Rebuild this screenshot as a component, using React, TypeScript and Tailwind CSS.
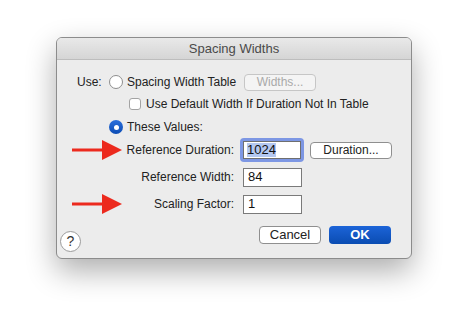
export default function App() {
  const font = { fontFamily: '"Liberation Sans", Arial, sans-serif' };

  const Arrow = () => (
    <svg width="50" height="20" viewBox="0 0 50 20" className="shrink-0">
      <rect x="0" y="8.5" width="31" height="3" fill="#ec2a1e" />
      <polygon points="30,0 50,10 30,20" fill="#ec2a1e" />
    </svg>
  );

  const Field = ({ value, focused }: { value: string; focused?: boolean }) =>
    focused ? (
      <div className="rounded-[4px] bg-[#7d97e4] p-[3px]">
        <div className="flex h-[18px] w-[58px] items-center border border-[#6f6f6f] bg-white pl-[3px] text-[13px]">
          <span className="bg-[#b4c8f1] leading-[14px] text-[#111]">{value}</span>
        </div>
      </div>
    ) : (
      <div className="ml-[3px] flex h-[19px] w-[59px] items-center border border-[#7a7a7a] bg-white pl-[4px] text-[13px] text-[#111]">
        {value}
      </div>
    );

  return (
    <div className="h-[332px] w-[467px] bg-white pl-[56px] pt-[37px] text-[12px] whitespace-nowrap text-[#222]" style={font}>
      <div className="flex h-[222px] w-[356px] flex-col overflow-hidden rounded-[6px] border border-[#8c8c8c] bg-[#ececec] shadow-[0_12px_30px_rgba(0,0,0,0.32)]">
        {/* title bar */}
        <div className="flex h-[22px] shrink-0 items-center justify-center border-b border-[#bdbdbd] bg-gradient-to-b from-[#e9e9e9] to-[#d5d5d5] text-[13px] text-[#4a4a4a]">
          Spacing Widths
        </div>

        <div className="flex flex-1 flex-col pt-[13px]">
          {/* use row */}
          <div className="flex h-[18px] items-center">
            <span className="ml-[20px] w-[32px] shrink-0">Use:</span>
            <span className="h-[14px] w-[14px] shrink-0 rounded-full border border-[#8e8e8e] bg-white" />
            <span className="ml-[4px] w-[117px] shrink-0">Spacing Width Table</span>
            <span className="flex h-[17px] w-[72px] shrink-0 items-center justify-center rounded-[4px] border border-[#c6c6c6] bg-[#f4f4f4] text-[#a9a9a9]">
              Widths...
            </span>
          </div>

          {/* checkbox row */}
          <div className="mt-[5px] flex h-[16px] items-center">
            <span className="ml-[72px] h-[12px] w-[12px] shrink-0 rounded-[3px] border border-[#a3a3a3] bg-white" />
            <span className="ml-[5px]">Use Default Width If Duration Not In Table</span>
          </div>

          {/* these values */}
          <div className="mt-[7px] flex h-[16px] items-center">
            <span className="ml-[52px] flex h-[14px] w-[14px] shrink-0 items-center justify-center rounded-full bg-gradient-to-b from-[#2a6fdc] to-[#0b4cb4]">
              <span className="h-[5px] w-[5px] rounded-full bg-white" />
            </span>
            <span className="ml-[4px]">These Values:</span>
          </div>

          {/* fields */}
          <div className="mt-[3px] flex flex-col gap-[3px]">
            <div className="flex h-[24px] items-center">
              <div className="ml-[15px] flex w-[162px] shrink-0 items-center justify-between">
                <Arrow />
                <span>Reference Duration:</span>
              </div>
              <div className="ml-[6px]">
                <Field value="1024" focused />
              </div>
              <span className="ml-[6px] flex h-[17px] w-[82px] shrink-0 items-center justify-center rounded-[4px] border border-[#8f8f8f] bg-white">
                Duration...
              </span>
            </div>
            <div className="flex h-[24px] items-center">
              <div className="ml-[15px] flex w-[162px] shrink-0 items-center justify-end">
                <span>Reference Width:</span>
              </div>
              <div className="ml-[6px]">
                <Field value="84" />
              </div>
            </div>
            <div className="flex h-[24px] items-center">
              <div className="ml-[15px] flex w-[162px] shrink-0 items-center justify-between">
                <Arrow />
                <span>Scaling Factor:</span>
              </div>
              <div className="ml-[6px]">
                <Field value="1" />
              </div>
            </div>
          </div>

          {/* bottom buttons */}
          <div className="mt-auto flex items-end pb-[6px]">
            <span className="ml-[3px] flex h-[21px] w-[21px] shrink-0 items-center justify-center rounded-full border border-[#9a9a9a] bg-white text-[14px] text-[#333]">
              ?
            </span>
            <div className="mb-[8px] ml-[178px] flex gap-[8px]">
              <span className="flex h-[18px] w-[62px] items-center justify-center rounded-[4px] border border-[#8f8f8f] bg-white text-[13px]">
                Cancel
              </span>
              <span className="flex h-[18px] w-[62px] items-center justify-center rounded-[4px] bg-gradient-to-b from-[#1c64d8] to-[#0a4cb2] text-[13px] font-bold text-white">
                OK
              </span>
            </div>
          </div>
        </div>
      </div>
    </div>
  );
}
